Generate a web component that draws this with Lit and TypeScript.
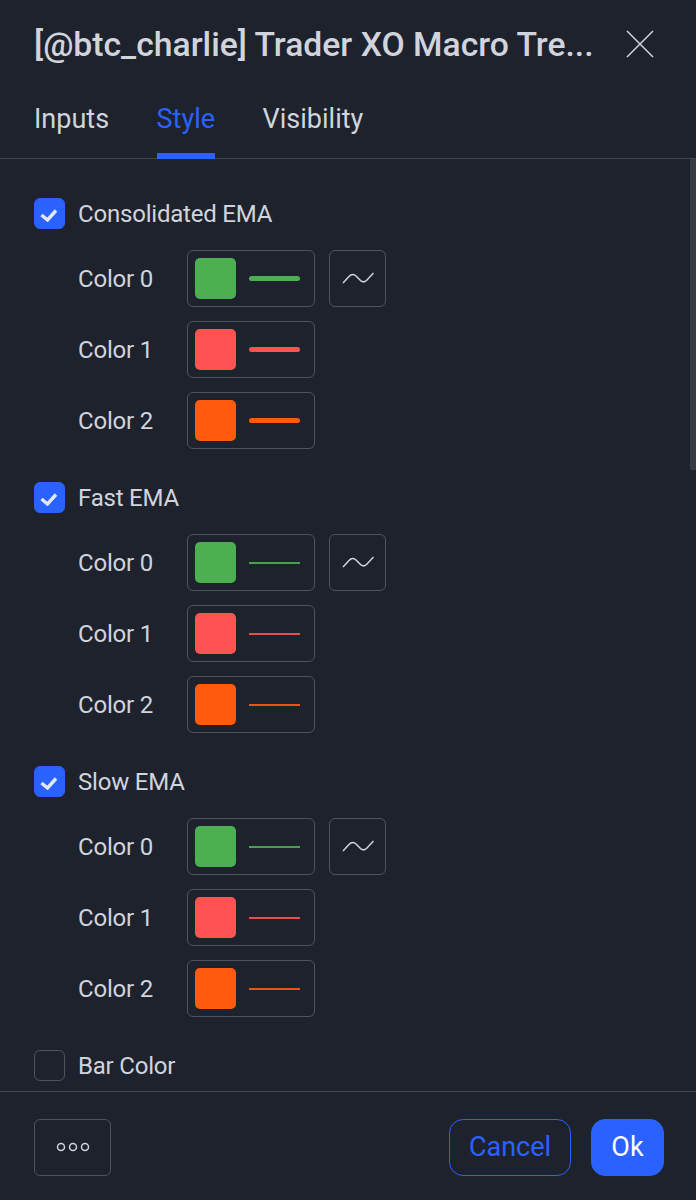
import { LitElement, html, css, svg } from 'lit';
import { customElement } from 'lit/decorators.js';

const COLORS = ['#4caf50', '#ff5252', '#ff5a0d'];

const SECTIONS = [
  { name: 'Consolidated EMA', thick: true },
  { name: 'Fast EMA', thick: false },
  { name: 'Slow EMA', thick: false },
];

const wave = svg`<path d="M1 14 L7 7.500 Q10 4 13.500 6.500 L18 11 Q21 14.500 24.500 11.500 L31.500 4" fill="none" stroke="#d1d4dc" stroke-width="1.500" />`;

@customElement('app-root')
export class AppRoot extends LitElement {
  static styles = css`
    :host {
      display: flex;
      flex-direction: column;
      height: 1200px;
      background: #1e222d;
      color: #d1d4dc;
      font-family: Roboto, 'Liberation Sans', sans-serif;
    }
    .head {
      display: flex;
      align-items: center;
      justify-content: space-between;
      height: 88px;
      padding: 0 42px 0 34px;
    }
    .title {
      font-size: 33.700px;
      font-weight: 500;
      white-space: nowrap;
    }
    .close {
      display: block;
    }
    .tabs {
      display: flex;
      gap: 47.500px;
      height: 71px;
      padding: 0 34px;
      box-sizing: border-box;
      border-bottom: 1px solid #434651;
    }
    .tab {
      font-size: 27px;
      line-height: 62px;
      height: 71px;
      box-sizing: border-box;
    }
    .tab.active {
      color: #2962ff;
      border-bottom: 6px solid #2962ff;
    }
    .body {
      position: relative;
      flex: 1;
      overflow: hidden;
      padding: 39px 34px 0;
    }
    .scrollbar {
      position: absolute;
      top: 0;
      right: 0;
      width: 6px;
      height: 311px;
      background: #363a45;
    }
    .section {
      display: flex;
      flex-direction: column;
      gap: 14px;
      margin-bottom: 33px;
    }
    .check-row {
      display: flex;
      align-items: center;
      gap: 13px;
      height: 31px;
      font-size: 24px;
      letter-spacing: -0.200px;
      margin-bottom: 7px;
    }
    .box {
      display: flex;
      align-items: center;
      justify-content: center;
      width: 31px;
      height: 31px;
      box-sizing: border-box;
      border-radius: 6px;
      border: 1px solid #50535e;
    }
    .box.on {
      background: #2962ff;
      border-color: #2962ff;
    }
    .row {
      display: flex;
      align-items: center;
      padding-left: 44px;
      font-size: 24px;
      letter-spacing: -0.200px;
    }
    .label {
      width: 109px;
    }
    .btn {
      display: flex;
      align-items: center;
      justify-content: center;
      box-sizing: border-box;
      height: 57px;
      border: 1px solid #50535e;
      border-radius: 6px;
    }
    .color {
      justify-content: flex-start;
      gap: 13px;
      width: 128px;
      padding-left: 7px;
    }
    .swatch {
      width: 41px;
      height: 41px;
      border-radius: 5px;
    }
    .line {
      width: 51px;
      height: 2px;
      opacity: 0.9;
    }
    .line.thick {
      height: 5px;
      border-radius: 2.500px;
      opacity: 1;
    }
    .shape {
      width: 57px;
      margin-left: 14px;
    }
    .foot {
      display: flex;
      align-items: center;
      height: 108px;
      padding: 0 32px 0 34px;
      border-top: 1px solid #434651;
    }
    .more {
      width: 77px;
      margin-top: 2px;
    }
    .spacer {
      flex: 1;
    }
    .action {
      font-size: 27px;
      border-radius: 14px;
      margin-top: 2px;
    }
    .cancel {
      width: 122px;
      color: #2962ff;
      border-color: #2962ff;
    }
    .ok {
      width: 73px;
      margin-left: 20px;
      color: #fff;
      background: #2962ff;
      border-color: #2962ff;
    }
  `;

  renderSection(s: { name: string; thick: boolean }) {
    return html`
      <div class="section">
        <div class="check-row">
          <span class="box on">
            <svg width="19" height="16" viewBox="0 0 19 16">
              <path d="M1.500 9 L7.500 14 L16 4.500" fill="none" stroke="#e3e8f6" stroke-width="3.400" />
            </svg>
          </span>
          ${s.name}
        </div>
        ${COLORS.map((c, i) => html`
          <div class="row">
            <span class="label">Color ${i}</span>
            <span class="btn color">
              <span class="swatch" style="background:${c}"></span>
              <span class="line ${s.thick ? 'thick' : ''}" style="background:${c}"></span>
            </span>
            ${i === 0 ? html`
              <span class="btn shape">
                <svg width="32" height="20" viewBox="0 0 32 20">${wave}</svg>
              </span>` : ''}
          </div>
        `)}
      </div>
    `;
  }

  render() {
    return html`
      <div class="head">
        <span class="title">[@btc_charlie] Trader XO Macro Tre...</span>
        <svg class="close" width="28" height="28" viewBox="0 0 28 28">
          <path d="M1 1 L27 27 M27 1 L1 27" stroke="#d1d4dc" stroke-width="1.500" />
        </svg>
      </div>
      <div class="tabs">
        <span class="tab">Inputs</span>
        <span class="tab active">Style</span>
        <span class="tab">Visibility</span>
      </div>
      <div class="body">
        ${SECTIONS.map((s) => this.renderSection(s))}
        <div class="check-row">
          <span class="box"></span>
          Bar Color
        </div>
        <div class="scrollbar"></div>
      </div>
      <div class="foot">
        <span class="btn more">
          <svg width="34" height="10" viewBox="0 0 34 10">
            <g fill="none" stroke="#d1d4dc" stroke-width="1.500">
              <circle cx="5" cy="5" r="3.500" />
              <circle cx="17" cy="5" r="3.500" />
              <circle cx="29" cy="5" r="3.500" />
            </g>
          </svg>
        </span>
        <span class="spacer"></span>
        <span class="btn action cancel">Cancel</span>
        <span class="btn action ok">Ok</span>
      </div>
    `;
  }
}
